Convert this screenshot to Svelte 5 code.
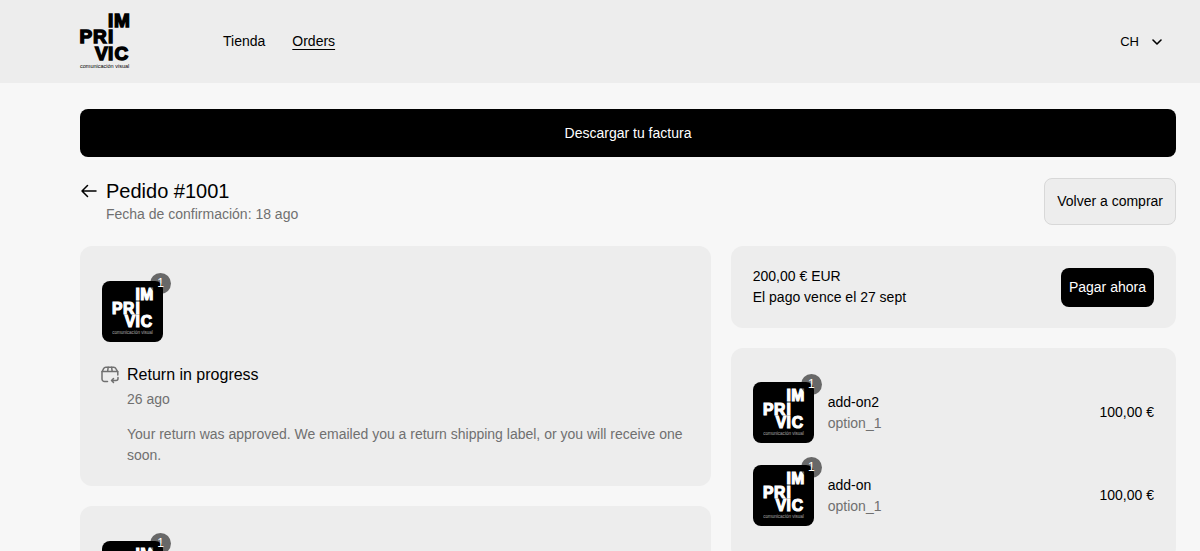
<script>
  const nav = [
    { label: 'Tienda', href: '#tienda', active: false },
    { label: 'Orders', href: '#orders', active: true }
  ]
  const items = [
    { name: 'add-on2', variant: 'option_1', qty: 1, price: '100,00 €' },
    { name: 'add-on', variant: 'option_1', qty: 1, price: '100,00 €' }
  ]
</script>

{#snippet logo()}
  <svg class="logo" viewBox="0 0 49 57" aria-label="Imprivic">
    <g font-size="19" font-weight="700" stroke="currentColor" stroke-width="1.4">
      <text x="28 34" y="14.500">IM</text>
      <text x="-0.500 13 28" y="31">PRI</text>
      <text x="15 28 34.500" y="47.500">VIC</text>
    </g>
    <text class="tagline" x="0" y="55.500" font-size="5.500">comunicación visual</text>
  </svg>
{/snippet}

{#snippet thumb(qty)}
  <div class="thumb">
    {@render logo()}
    <span class="badge">{qty}</span>
  </div>
{/snippet}

<header>
  <a class="brand" href="#inicio">{@render logo()}</a>
  <nav>
    {#each nav as link}
      <a href={link.href} class:active={link.active}>{link.label}</a>
    {/each}
  </nav>
  <button class="account">
    CH
    <svg width="10" height="6" viewBox="0 0 10 6" fill="none" stroke="currentColor" stroke-width="1.6" stroke-linecap="round" stroke-linejoin="round">
      <path d="M1 1l4 4 4-4" />
    </svg>
  </button>
</header>

<main>
  <button class="primary invoice">Descargar tu factura</button>

  <div class="heading">
    <a class="back" href="#orders" aria-label="Orders">
      <svg width="16" height="14" viewBox="0 0 16 14" fill="none" stroke="currentColor" stroke-width="1.5" stroke-linecap="round" stroke-linejoin="round">
        <path d="M15 7H1M6.500 1.500L1 7l5.500 5.500" />
      </svg>
    </a>
    <div class="title">
      <h1>Pedido #1001</h1>
      <p>Fecha de confirmación: 18 ago</p>
    </div>
    <button class="secondary">Volver a comprar</button>
  </div>

  <div class="columns">
    <div class="column">
      <section class="card shipment">
        {@render thumb(1)}
        <div class="status">
          <svg width="20" height="18" viewBox="0 0 20 18" fill="none" stroke="currentColor" stroke-width="1.5" stroke-linecap="round" stroke-linejoin="round">
            <path d="M6.500 15.500H3.500A2.500 2.500 0 0 1 1 13V6l1.600-3.400A2.500 2.500 0 0 1 4.900 1.200h7.700a2.500 2.500 0 0 1 2.300 1.400L16.800 6v3" />
            <path d="M1 5.500h15.800M7.200 1.200L6.600 5.500M10.600 1.200l.6 4.300" />
            <path d="M17 11.500v1a2 2 0 0 1-2 2h-4M12.500 12.500l-2 2 2 2" />
          </svg>
          <div>
            <h2>Return in progress</h2>
            <p class="date">26 ago</p>
            <p>Your return was approved. We emailed you a return shipping label, or you will receive one soon.</p>
          </div>
        </div>
      </section>
      <section class="card shipment">
        {@render thumb(1)}
      </section>
    </div>

    <div class="column">
      <section class="card payment">
        <div>
          <p>200,00 € EUR</p>
          <p>El pago vence el 27 sept</p>
        </div>
        <button class="primary">Pagar ahora</button>
      </section>
      <section class="card items">
        {#each items as item}
          <div class="item">
            {@render thumb(item.qty)}
            <div class="info">
              <p>{item.name}</p>
              <p class="variant">{item.variant}</p>
            </div>
            <span>{item.price}</span>
          </div>
        {/each}
      </section>
    </div>
  </div>
</main>

<style>
  :global(body) {
    background: #f7f7f7;
    color: #000;
    font: 14px/21px "Liberation Sans", Arial, sans-serif;
    overflow: hidden;
  }
  h1, h2, p {
    margin: 0;
    font-weight: normal;
  }
  a {
    color: inherit;
    text-decoration: none;
  }
  button {
    font: inherit;
    color: inherit;
    border: none;
    background: none;
    cursor: pointer;
  }
  header {
    display: flex;
    align-items: center;
    height: 83px;
    padding: 0 38px 0 80px;
    background: #ededed;
  }
  .brand {
    margin-top: -2px;
  }
  .logo {
    display: block;
    width: 49px;
    height: 57px;
    fill: currentColor;
    overflow: visible;
  }
  nav {
    display: flex;
    flex: 1;
    gap: 27px;
    margin-left: 94px;
  }
  nav .active {
    text-decoration: underline;
    text-underline-offset: 3px;
  }
  .account {
    display: flex;
    align-items: center;
    gap: 13px;
    padding: 0;
    font-size: 13px;
  }
  main {
    padding: 26px 24px 0 80px;
  }
  .primary {
    background: #000;
    color: #fff;
    border-radius: 8px;
  }
  .invoice {
    display: block;
    width: 100%;
    height: 48px;
  }
  .heading {
    display: flex;
    align-items: flex-start;
    margin: 21px 0;
  }
  .back {
    padding: 6px 9px 0 1px;
  }
  .back svg {
    display: block;
  }
  .title {
    flex: 1;
  }
  h1 {
    font-size: 20px;
    line-height: 26px;
  }
  .title p {
    color: #707070;
  }
  .secondary {
    height: 47px;
    padding: 0 12px;
    background: #ededed;
    border: 1px solid #d8d8d8;
    border-radius: 8px;
  }
  .columns {
    display: grid;
    grid-template-columns: minmax(0, 17fr) minmax(0, 12fr);
    gap: 20px;
  }
  .column {
    display: flex;
    flex-direction: column;
    gap: 20px;
  }
  .card {
    padding: 20px 22px;
    background: #ededed;
    border-radius: 12px;
  }
  .shipment {
    padding-top: 35px;
  }
  .thumb {
    position: relative;
    display: flex;
    align-items: center;
    justify-content: center;
    width: 61px;
    height: 61px;
    background: #000;
    color: #fff;
    border-radius: 8px;
  }
  .thumb .logo {
    width: 41px;
    height: 47px;
  }
  .thumb .tagline {
    opacity: 0.6;
  }
  .badge {
    position: absolute;
    top: -8px;
    right: -8px;
    width: 21px;
    height: 21px;
    border-radius: 50%;
    background: rgba(0, 0, 0, 0.56);
    font-size: 12px;
    text-align: center;
  }
  .status {
    display: flex;
    gap: 6px;
    margin-top: 22px;
    color: #707070;
  }
  .status svg {
    flex: none;
    margin: 2px 0 0 -1px;
  }
  h2 {
    font-size: 16px;
    line-height: 22px;
    color: #000;
  }
  .date {
    margin: 3px 0 14px;
  }
  .payment {
    display: flex;
    align-items: center;
    justify-content: space-between;
  }
  .payment .primary {
    height: 39px;
    padding: 0 8px;
  }
  .items {
    display: flex;
    flex-direction: column;
    gap: 22px;
    padding-top: 34px;
    padding-bottom: 34px;
  }
  .item {
    display: flex;
    align-items: center;
    gap: 14px;
  }
  .info {
    flex: 1;
  }
  .variant {
    color: #707070;
  }
</style>
